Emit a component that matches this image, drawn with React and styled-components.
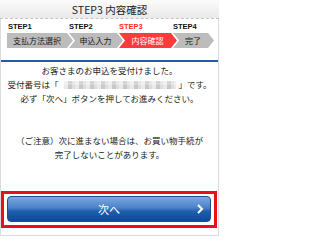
import React from 'react';
import styled, { createGlobalStyle } from 'styled-components';

const GlobalStyle = createGlobalStyle`
    body {
        margin: 0;
        background: #fff;
        font-family: "Noto Sans CJK JP", "Noto Sans", sans-serif;
    }
`;

// ページ枠
const Page = styled.div`
    width: 219px;
    height: 236px;
    box-sizing: border-box;
    border-left: 1px solid #dcdcdc;
    border-right: 1px solid #dcdcdc;
    border-bottom: 1px solid #dcdcdc;
    display: flex;
    flex-direction: column;
`;

// ヘッダー
const Header = styled.div`
    height: 18px;
    margin: 0 -1px;
    background: linear-gradient(#fbfbfb, #e9e9e9);
    border-bottom: 1px dashed #c4c4c4;
    display: flex;
    align-items: center;
    justify-content: center;
    font-size: 10.5px;
    color: #222;
`;

// ステップ
const Steps = styled.div`
    display: flex;
    padding: 4px 0 0 6px;
`;

const Step = styled.div`
    width: ${({ $w }) => $w}px;
    margin-left: ${({ $first }) => ($first ? 0 : -4)}px;
    display: flex;
    flex-direction: column;
`;

const StepLabel = styled.div`
    font-family: "Liberation Sans", Arial, sans-serif;
    font-weight: bold;
    font-size: 7.5px;
    line-height: 8px;
    height: 8px;
    margin-bottom: 2px;
    padding-left: ${({ $first }) => ($first ? 1 : 0)}px;
    color: ${({ $active }) => ($active ? '#ff2a2a' : '#111')};
`;

const StepBar = styled.div`
    height: 15px;
    display: flex;
    align-items: center;
    justify-content: center;
    padding-left: ${({ $first }) => ($first ? 0 : 5)}px;
    padding-right: 6px;
    font-size: 8px;
    color: ${({ $active }) => ($active ? '#fff' : '#1a1a1a')};
    background: ${({ $active }) => ($active ? '#ff3b3b' : '#bcbcbc')};
    clip-path: ${({ $first }) =>
        $first
            ? 'polygon(0 0, calc(100% - 6px) 0, 100% 50%, calc(100% - 6px) 100%, 0 100%)'
            : 'polygon(0 0, calc(100% - 6px) 0, 100% 50%, calc(100% - 6px) 100%, 0 100%, 6px 50%)'};
`;

const Divider = styled.div`
    height: 2px;
    background: #1e5ea8;
    margin: 12px 0 0;
`;

// メッセージ
const Message = styled.div`
    padding-top: 1px;
    text-align: center;
    font-size: 8.5px;
    line-height: 14px;
    color: #222;
`;

const Note = styled(Message)`
    padding-top: 28px;
`;

const Masked = styled.span`
    display: inline-block;
    width: 112px;
    height: 8px;
    margin: 0 2px 0 6px;
    vertical-align: -1px;
    background:
        repeating-linear-gradient(90deg, rgba(255, 255, 255, 0.5) 0 4px, rgba(0, 0, 0, 0.06) 4px 8px, rgba(255, 255, 255, 0.2) 8px 11px),
        repeating-linear-gradient(0deg, #d4d4d4 0 4px, #e2e2e2 4px 8px);
`;

// ボタン
const ButtonFrame = styled.div`
    margin: 30px 1px 0 0;
    border: 3px solid #e8101c;
    padding: 2px 3px 3px 3px;
`;

const NextButton = styled.button`
    position: relative;
    width: 100%;
    height: 26px;
    border: 1px solid #1a4f93;
    border-radius: 4px;
    background: linear-gradient(#7ea8dd 0%, #4a82c8 45%, #1f5eac 60%, #0d4a98 100%);
    color: #fff;
    font-family: "Noto Sans CJK JP", sans-serif;
    font-size: 11px;
    display: flex;
    align-items: center;
    justify-content: center;
    padding: 0;
`;

const Chevron = styled.svg`
    position: absolute;
    right: 6px;
    top: 50%;
    transform: translateY(-50%);
`;

const steps = [
    { label: 'STEP1', name: '支払方法選択', w: 66 },
    { label: 'STEP2', name: '申込入力', w: 54 },
    { label: 'STEP3', name: '内容確認', w: 58, active: true },
    { label: 'STEP4', name: '完了', w: 41 },
];

const App = () => (
    <>
        <GlobalStyle />
        <Page>
            <Header>STEP3 内容確認</Header>
            <Steps>
                {steps.map((s, i) => (
                    <Step key={s.label} $w={s.w} $first={i === 0}>
                        <StepLabel $active={s.active} $first={i === 0}>{s.label}</StepLabel>
                        <StepBar $active={s.active} $first={i === 0}>{s.name}</StepBar>
                    </Step>
                ))}
            </Steps>
            <Divider />
            <Message>
                お客さまのお申込を受付けました。
                <br />
                受付番号は「<Masked />」です。
                <br />
                必ず「次へ」ボタンを押してお進みください。
            </Message>
            <Note>
                （ご注意）次に進まない場合は、お買い物手続が
                <br />
                完了しないことがあります。
            </Note>
            <ButtonFrame>
                <NextButton type="button">
                    次へ
                    <Chevron width="8" height="10" viewBox="0 0 8 10">
                        <path d="M2 1 L6 5 L2 9" fill="none" stroke="#fff" strokeWidth="2" />
                    </Chevron>
                </NextButton>
            </ButtonFrame>
        </Page>
    </>
);

export default App;
